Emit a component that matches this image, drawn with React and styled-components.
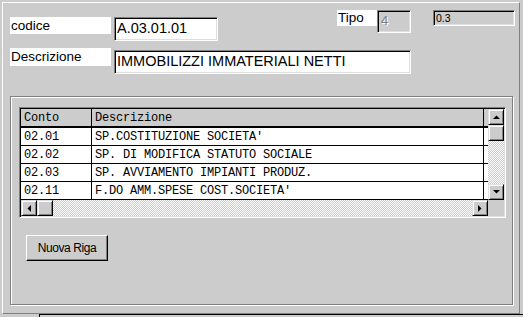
import React from 'react';
import styled, { createGlobalStyle } from 'styled-components';

const GlobalStyle = createGlobalStyle`
  html, body {
    margin: 0;
    padding: 0;
    background: #cccccc;
  }
  body {
    font-family: "Liberation Sans", Arial, sans-serif;
  }
`;

const Screen = styled.div`
  width: 523px;
  height: 317px;
  overflow: hidden;
  box-sizing: border-box;
  padding: 2px 0 0 2px;
  background: #cccccc;
`;

const Panel = styled.div`
  box-sizing: border-box;
  width: 518px;
  height: 312px;
  border-top: 1px solid #ffffff;
  border-left: 1px solid #ffffff;
  border-right: 1px solid #808080;
  border-bottom: 1px solid #808080;
  padding: 7px 0 0 7px;
  display: flex;
  flex-direction: column;
`;

const FieldRow = styled.div`
  display: flex;
  align-items: flex-start;
  margin-top: ${(p) => p.$top || 0}px;
`;

const Label = styled.div`
  box-sizing: border-box;
  width: ${(p) => p.$w}px;
  height: ${(p) => p.$h}px;
  margin-top: ${(p) => p.$top || 0}px;
  margin-left: ${(p) => p.$left || 0}px;
  background: #ffffff;
  color: #000;
  font-size: 13.5px;
  line-height: ${(p) => p.$h}px;
  padding-left: 1px;
  white-space: nowrap;
`;

const TextBox = styled.div`
  box-sizing: border-box;
  width: ${(p) => p.$w}px;
  height: ${(p) => p.$h}px;
  margin-top: ${(p) => p.$top || 0}px;
  margin-left: ${(p) => p.$left || 0}px;
  background: ${(p) => (p.$disabled ? '#cccccc' : '#ffffff')};
  border: 1px solid;
  border-color: #808080 #ffffff #ffffff #808080;
  box-shadow: inset 1px 1px 0 #000000, inset -1px -1px 0 #dfdfdf;
  padding: 0 0 ${(p) => p.$lift || 0}px ${(p) => p.$pad || 2}px;
  display: flex;
  align-items: center;
  font-size: ${(p) => p.$size || 14.5}px;
  color: ${(p) => (p.$disabled ? '#808080' : '#000000')};
  text-shadow: ${(p) => (p.$disabled ? '1px 1px 0 #ffffff' : 'none')};
  white-space: nowrap;
  overflow: hidden;
`;

const GroupBox = styled.div`
  box-sizing: border-box;
  width: 503px;
  height: 209px;
  margin-top: 22px;
  border: 1px solid #808080;
  box-shadow: inset 1px 1px 0 #ffffff, 1px 1px 0 #ffffff;
  padding: 10px 0 0 8px;
  display: flex;
  flex-direction: column;
  align-items: flex-start;
`;

const GridFrame = styled.div`
  box-sizing: border-box;
  width: 487px;
  height: 111px;
  border: 1px solid;
  border-color: #808080 #ffffff #ffffff #808080;
  box-shadow: inset 1px 1px 0 #000000, inset -1px -1px 0 #dfdfdf;
  padding: 1px;
`;

const GridLayout = styled.div`
  display: grid;
  grid-template-columns: 1fr 16px;
  grid-template-rows: 1fr 16px;
  height: 100%;
`;

const Table = styled.div`
  display: grid;
  grid-template-columns: 71px 392px 1fr;
  grid-template-rows: 19px repeat(4, 18px);
  background: #ffffff;
  font-family: "Liberation Mono", "Courier New", monospace;
  font-size: 12px;
  letter-spacing: -0.2px;
  color: #000;
`;

const HeadCell = styled.div`
  box-sizing: border-box;
  background: #cccccc;
  border-bottom: 2px solid #000000;
  border-right: ${(p) => (p.$last ? 'none' : '1px solid #000000')};
  padding: 1px 0 0 3px;
  display: flex;
  align-items: center;
  white-space: nowrap;
`;

const Cell = styled.div`
  box-sizing: border-box;
  border-bottom: 1px solid #000000;
  border-right: ${(p) => (p.$last ? 'none' : '1px solid #000000')};
  padding: 1px 0 0 3px;
  display: flex;
  align-items: center;
  white-space: nowrap;
  overflow: hidden;
`;

const ScrollBar = styled.div`
  display: flex;
  flex-direction: ${(p) => (p.$vertical ? 'column' : 'row')};
`;

const Track = styled.div`
  flex: 1;
  background: repeating-conic-gradient(#ffffff 0 25%, #cccccc 0 50%) 0 0 / 2px 2px;
`;

const ScrollButton = styled.div`
  box-sizing: border-box;
  width: 16px;
  height: 16px;
  flex: none;
  background: #cccccc;
  border: 1px solid;
  border-color: #dfdfdf #000000 #000000 #dfdfdf;
  box-shadow: inset 1px 1px 0 #ffffff, inset -1px -1px 0 #808080;
  display: flex;
  align-items: center;
  justify-content: center;
`;

const Corner = styled.div`
  background: #cccccc;
`;

const PushButton = styled.button`
  box-sizing: border-box;
  width: 82px;
  height: 26px;
  margin: 17px 0 0 7px;
  padding: 0 0 1px;
  background: #cccccc;
  border: 1px solid;
  border-color: #ffffff #000000 #000000 #ffffff;
  box-shadow: inset -1px -1px 0 #808080;
  font-family: "Liberation Sans", Arial, sans-serif;
  font-size: 12px;
  letter-spacing: -0.4px;
  color: #000;
`;

const BottomField = styled.div`
  box-sizing: border-box;
  height: 10px;
  margin-left: 37px;
  border-top: 1px solid #000000;
  border-left: 1px solid #000000;
  background: #cccccc;
`;

const Arrow = ({ dir }) => {
  const pts = {
    up: '0,4 7,4 3.5,0.5',
    down: '0,0 7,0 3.5,3.5',
    left: '4,0 4,7 0.5,3.5',
    right: '0,0 0,7 3.5,3.5',
  }[dir];
  const vertical = dir === 'up' || dir === 'down';
  return (
    <svg width={vertical ? 7 : 4} height={vertical ? 4 : 7} viewBox={vertical ? '0 0 7 4' : '0 0 4 7'}>
      <polygon points={pts} fill="#000" />
    </svg>
  );
};

const rows = [
  ['02.01', "SP.COSTITUZIONE SOCIETA'"],
  ['02.02', 'SP. DI MODIFICA STATUTO SOCIALE'],
  ['02.03', 'SP. AVVIAMENTO IMPIANTI PRODUZ.'],
  ['02.11', "F.DO AMM.SPESE COST.SOCIETA'"],
];

export default function App() {
  return (
    <Screen>
      <GlobalStyle />
      <Panel>
        <FieldRow>
          <Label $w={101} $h={17} $top={7}>codice</Label>
          <TextBox $w={104} $h={24} $top={7} $left={3} $lift={2}>A.03.01.01</TextBox>
          <Label $w={40} $h={16} $left={119}>Tipo</Label>
          <TextBox $w={34} $h={23} $disabled $size={13} $pad={3} $lift={2}>4</TextBox>
          <TextBox $w={82} $h={16} $left={22} $disabled={false} $size={10.5} $pad={2} style={{ background: '#cccccc' }}>0.3</TextBox>
        </FieldRow>
        <FieldRow $top={7}>
          <Label $w={101} $h={18}>Descrizione</Label>
          <TextBox $w={297} $h={24} $top={2} $left={3} $lift={2}>IMMOBILIZZI IMMATERIALI NETTI</TextBox>
        </FieldRow>

        <GroupBox>
          <GridFrame>
            <GridLayout>
              <Table>
                <HeadCell>Conto</HeadCell>
                <HeadCell>Descrizione</HeadCell>
                <HeadCell $last />
                {rows.map(([code, desc]) => (
                  <React.Fragment key={code}>
                    <Cell>{code}</Cell>
                    <Cell>{desc}</Cell>
                    <Cell $last />
                  </React.Fragment>
                ))}
              </Table>
              <ScrollBar $vertical>
                <ScrollButton><Arrow dir="up" /></ScrollButton>
                <ScrollButton />
                <Track />
                <ScrollButton><Arrow dir="down" /></ScrollButton>
              </ScrollBar>
              <ScrollBar>
                <ScrollButton><Arrow dir="left" /></ScrollButton>
                <ScrollButton />
                <Track />
                <ScrollButton><Arrow dir="right" /></ScrollButton>
              </ScrollBar>
              <Corner />
            </GridLayout>
          </GridFrame>
          <PushButton>Nuova Riga</PushButton>
        </GroupBox>
      </Panel>
      <BottomField />
    </Screen>
  );
}
